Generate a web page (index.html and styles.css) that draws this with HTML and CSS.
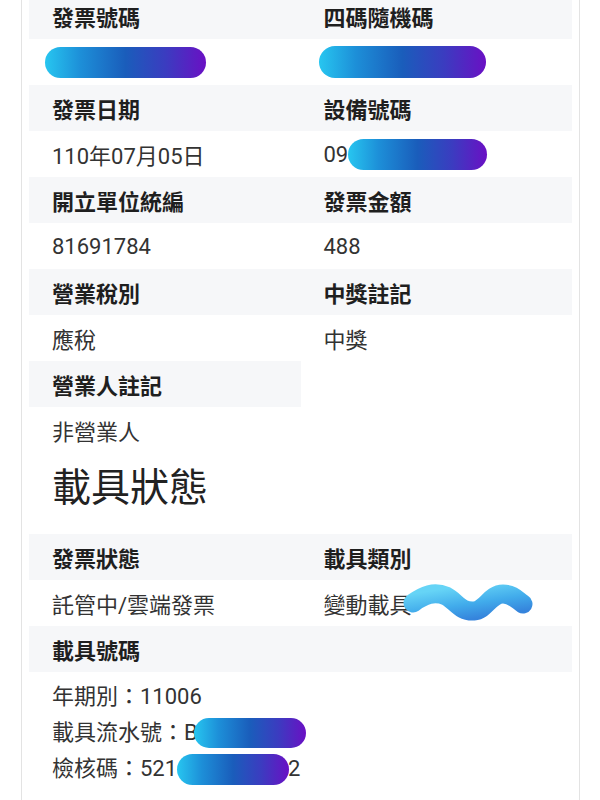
FILE: index.html
```html
<!DOCTYPE html>
<html lang="zh-Hant">
<head>
<meta charset="utf-8">
<link rel="stylesheet" href="styles.css">
</head>
<body>
<div class="card">
  <div class="grid">
    <div class="cell label">發票號碼</div>
    <div class="cell label">四碼隨機碼</div>
    <div class="cell value"><span class="blur blur-a"></span></div>
    <div class="cell value"><span class="blur blur-b"></span></div>
    <div class="cell label">發票日期</div>
    <div class="cell label">設備號碼</div>
    <div class="cell value">110年07月05日</div>
    <div class="cell value">09<span class="blur blur-c"></span></div>
    <div class="cell label">開立單位統編</div>
    <div class="cell label">發票金額</div>
    <div class="cell value">81691784</div>
    <div class="cell value">488</div>
    <div class="cell label">營業稅別</div>
    <div class="cell label">中獎註記</div>
    <div class="cell value">應稅</div>
    <div class="cell value">中獎</div>
    <div class="cell label">營業人註記</div>
    <div class="cell"></div>
    <div class="cell value">非營業人</div>
    <div class="cell"></div>
  </div>
  <h2 class="section">載具狀態</h2>
  <div class="grid">
    <div class="cell label">發票狀態</div>
    <div class="cell label">載具類別</div>
    <div class="cell value">託管中/雲端發票</div>
    <div class="cell value">變動載具<svg class="squiggle" width="132" height="40" viewBox="0 0 132 40"><defs><linearGradient id="sq" x1="0" y1="0" x2="1" y2="1"><stop offset="0" stop-color="#66d4f6"/><stop offset="0.55" stop-color="#41abeb"/><stop offset="1" stop-color="#3584dc"/></linearGradient></defs><path d="M11 21 C 22 13, 32 9, 44 14 C 54 19, 58 30, 72 29 C 84 28, 88 12, 101 12 C 111 12, 116 19, 121 22" fill="none" stroke="url(#sq)" stroke-width="19" stroke-linecap="round"/></svg></div>
    <div class="cell label span2">載具號碼</div>
  </div>
  <div class="lines">
    <div class="line">年期別：11006</div>
    <div class="line">載具流水號：B<span class="blur blur-d"></span></div>
    <div class="line">檢核碼：521<span class="blur blur-e"></span>2</div>
  </div>
</div>
</body>
</html>
```
FILE: styles.css
```css
html, body {
  margin: 0;
  padding: 0;
  background: #ffffff;
}
body {
  font-family: Roboto, "Noto Sans CJK TC", sans-serif;
  color: #2a2a2a;
}
.card {
  box-sizing: border-box;
  width: 559px;
  margin: -7px 0 0 21px;
  padding: 0 7px 40px;
  border: 1.5px solid #e3e3e3;
  border-top: none;
  background: #fff;
  min-height: 830px;
}
.grid {
  display: grid;
  grid-template-columns: 1fr 1fr;
}
.cell {
  height: 46px;
  box-sizing: border-box;
  padding-left: 23px;
  display: flex;
  align-items: center;
  font-size: 22px;
  white-space: nowrap;
}
.label {
  background: #f6f7f9;
  font-weight: 700;
  color: #1f1f1f;
}
.value {
  color: #333;
  font-weight: 400;
}
.span2 {
  grid-column: 1 / span 2;
}
.section {
  margin: 10px 0 21px;
  padding-left: 23px;
  font-size: 39px;
  line-height: 50px;
  font-weight: 400;
  color: #222;
}
.lines {
  padding: 7px 0 0 23px;
}
.line {
  font-size: 22px;
  line-height: 36px;
  color: #333;
  display: flex;
  align-items: center;
  white-space: nowrap;
}
.blur {
  display: inline-block;
  border-radius: 16px;
  background: linear-gradient(90deg, #27c6f0 0%, #1d8fd8 22%, #1a5dbb 50%, #3b3cc0 75%, #6a10c4 100%);
}
.blur-a {
  width: 161px;
  height: 31px;
  margin-left: -7px;
}
.blur-b {
  width: 167px;
  height: 32px;
  margin-left: -5px;
}
.blur-c {
  width: 139px;
  height: 31px;
  margin-left: 0;
}
.blur-d {
  width: 112px;
  height: 30px;
  margin-left: -4px;
}
.blur-e {
  width: 112px;
  height: 31px;
  margin-left: 0;
  margin-right: -1px;
}
.squiggle {
  margin-left: -10px;
  margin-top: -2px;
}
```
